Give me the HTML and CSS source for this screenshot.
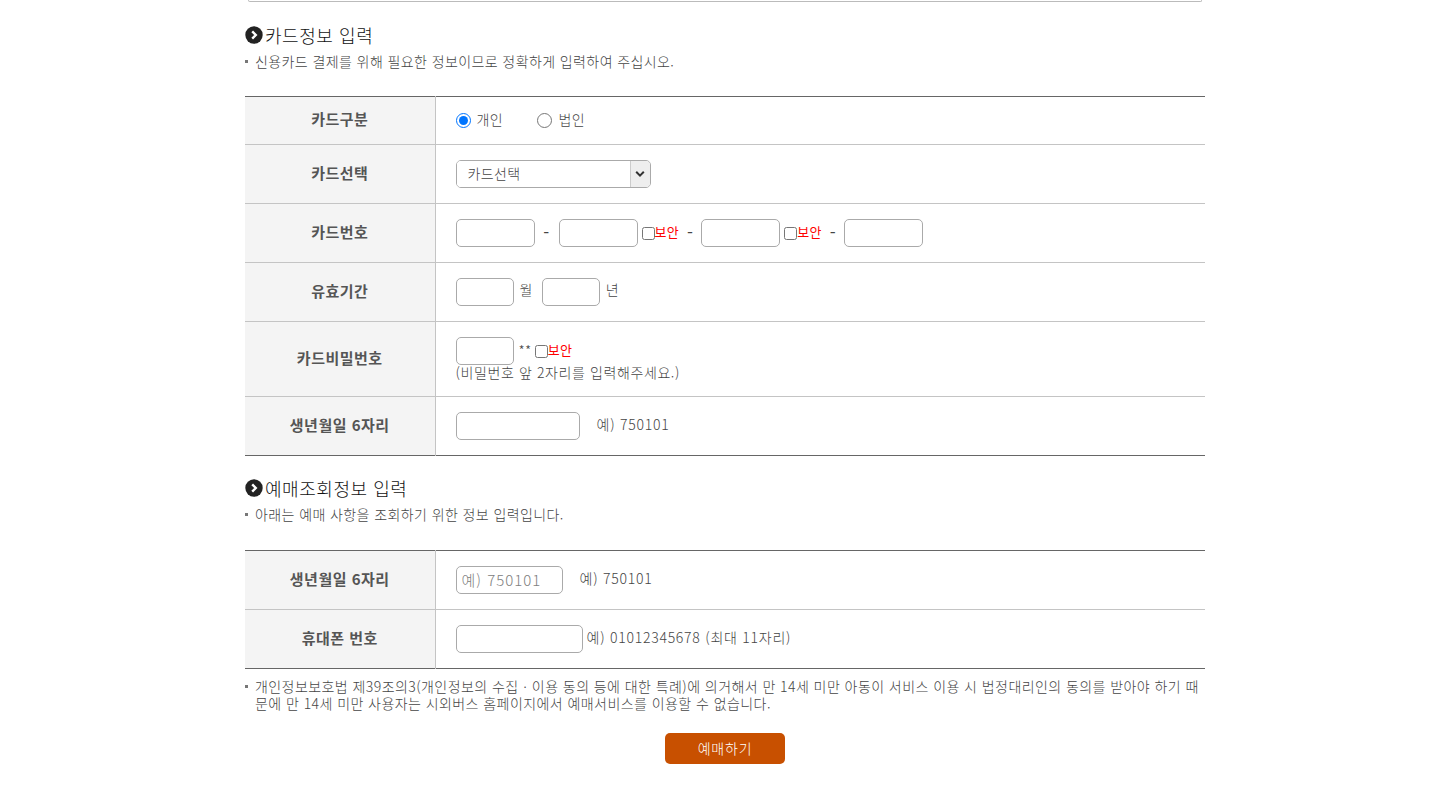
FILE: index.html
```html
<!DOCTYPE html>
<html lang="ko">
<head>
<meta charset="utf-8">
<title>카드정보 입력</title>
<link rel="stylesheet" href="styles.css">
</head>
<body>
<main class="wrap">
  <div class="top-box"></div>

  <h2 class="title"><svg class="title-icon" viewBox="0 0 18 18" width="18" height="18"><circle cx="9" cy="9" r="8.7" fill="#222"/><path d="M7.2 5.4 L10.8 9 L7.2 12.6" fill="none" stroke="#fff" stroke-width="2.4"/></svg>카드정보 입력</h2>
  <p class="bullet">신용카드 결제를 위해 필요한 정보이므로 정확하게 입력하여 주십시오.</p>

  <table class="form-table first">
    <tr class="r48">
      <th>카드구분</th>
      <td>
        <label class="radio"><input type="radio" name="kind" checked><span class="raised">개인</span></label>
        <label class="radio"><input type="radio" name="kind"><span class="raised">법인</span></label>
      </td>
    </tr>
    <tr class="r59">
      <th>카드선택</th>
      <td>
        <div class="select-wrap">
          <select class="select"><option>카드선택</option></select>
          <span class="select-arrow"><svg viewBox="0 0 10 8" width="10" height="8"><path d="M1.2 1.8 L5 5.6 L8.8 1.8" fill="none" stroke="#333" stroke-width="2"/></svg></span>
        </div>
      </td>
    </tr>
    <tr class="r59">
      <th>카드번호</th>
      <td>
        <div class="line">
          <input class="inp w79" type="text"><span class="dash">-</span>
          <input class="inp w79" type="text"><label class="secure"><input type="checkbox"><span class="raised-more">보안</span></label><span class="dash d2">-</span>
          <input class="inp w79" type="text"><label class="secure"><input type="checkbox"><span class="raised-more">보안</span></label><span class="dash d2">-</span>
          <input class="inp w79" type="text">
        </div>
      </td>
    </tr>
    <tr class="r59">
      <th>유효기간</th>
      <td>
        <div class="line">
          <input class="inp w58" type="text"><span class="unit">월</span>
          <input class="inp w58" type="text"><span class="unit">년</span>
        </div>
      </td>
    </tr>
    <tr class="r75">
      <th>카드비밀번호</th>
      <td>
        <div class="line">
          <input class="inp w58" type="text"><span class="stars">**</span><label class="secure"><input type="checkbox"><span class="raised-more">보안</span></label>
        </div>
        <div class="hint">(비밀번호 앞 2자리를 입력해주세요.)</div>
      </td>
    </tr>
    <tr class="r59">
      <th>생년월일 6자리</th>
      <td>
        <div class="line">
          <input class="inp w124" type="text"><span class="example e17">예) 750101</span>
        </div>
      </td>
    </tr>
  </table>

  <h2 class="title"><svg class="title-icon" viewBox="0 0 18 18" width="18" height="18"><circle cx="9" cy="9" r="8.7" fill="#222"/><path d="M7.2 5.4 L10.8 9 L7.2 12.6" fill="none" stroke="#fff" stroke-width="2.4"/></svg>예매조회정보 입력</h2>
  <p class="bullet">아래는 예매 사항을 조회하기 위한 정보 입력입니다.</p>

  <table class="form-table second">
    <tr class="r59">
      <th>생년월일 6자리</th>
      <td>
        <div class="line">
          <input class="inp w107" type="text" placeholder="예) 750101"><span class="example e17">예) 750101</span>
        </div>
      </td>
    </tr>
    <tr class="r59">
      <th>휴대폰 번호</th>
      <td>
        <div class="line">
          <input class="inp w127" type="text"><span class="example e4">예) 01012345678 (최대 11자리)</span>
        </div>
      </td>
    </tr>
  </table>

  <p class="bullet note">개인정보보호법 제39조의3(개인정보의 수집ㆍ이용 동의 등에 대한 특례)에 의거해서 만 14세 미만 아동이 서비스 이용 시 법정대리인의 동의를 받아야 하기 때문에 만 14세 미만 사용자는 시외버스 홈페이지에서 예매서비스를 이용할 수 없습니다.</p>

  <div class="actions"><button class="submit" type="button">예매하기</button></div>
</main>
</body>
</html>
```
FILE: styles.css
```css
* { box-sizing: border-box; }
html, body { margin: 0; padding: 0; background: #fff; }
body {
  font-family: "Noto Sans CJK KR", "Noto Sans", sans-serif;
  font-size: 14px;
  font-weight: 300;
  letter-spacing: 0.4px;
  color: #444;
}
.wrap { width: 960px; margin: 0 0 0 245px; padding-bottom: 21px; }
.top-box {
  height: 2px;
  margin: 0 3px;
  border: 1px solid #bbb;
  border-top: 0;
  border-radius: 0 0 5px 5px;
}
.title {
  display: flex;
  align-items: center;
  margin: 0;
  height: 26px;
  font-size: 18px;
  font-weight: 300;
  letter-spacing: 0.55px;
  color: #111;
}
.form-table + .title { margin-top: 19px; }
.top-box + .title { margin-top: 20px; }
.title-icon { margin-right: 2px; flex: none; }
.bullet {
  position: relative;
  margin: 5px 0 0;
  padding-left: 10px;
  line-height: 17px;
}
.bullet::before {
  content: "";
  position: absolute;
  left: 0;
  top: 7px;
  width: 3px;
  height: 3px;
  background: #777;
}
.form-table {
  width: 960px;
  margin-top: 26px;
  border-collapse: collapse;
  table-layout: fixed;
  border-top: 1px solid #666;
  border-bottom: 1px solid #666;
}
.form-table.second { margin-top: 27px; }
.form-table tr + tr { border-top: 1px solid #c4c4c4; }
.r48 { height: 48px; }
.r59 { height: 59px; }
.r75 { height: 75px; }
.form-table th {
  width: 190px;
  padding: 0 0 4px;
  background: #f4f4f4;
  border-right: 1px solid #c4c4c4;
  font-weight: 700;
  font-size: 15px;
  letter-spacing: 0.5px;
  color: #555;
  text-align: center;
}
.form-table td { padding: 0 0 0 20px; }
.line { display: flex; align-items: center; }
.raised { padding-bottom: 3px; }
.raised-more { padding-bottom: 4px; }
.radio { display: inline-flex; align-items: center; margin-right: 30px; }
.radio input { width: 15px; height: 15px; margin: 0 6px 0 0; }
.select-wrap {
  display: flex;
  width: 195px;
  height: 28px;
  border: 1px solid #aaa;
  border-radius: 5px;
  overflow: hidden;
}
.select {
  flex: 1;
  min-width: 0;
  appearance: none;
  border: 0;
  background: #fff;
  padding: 0 11px 2px;
  font: inherit;
  letter-spacing: 0.4px;
  color: #444;
  outline: 0;
}
.select-arrow {
  display: flex;
  align-items: center;
  justify-content: center;
  width: 20px;
  background: #eee;
  border-left: 1px solid #ccc;
}
.inp {
  height: 28px;
  margin: 0;
  padding: 0 5px;
  border: 1px solid #aaa;
  border-radius: 5px;
  background: #fff;
  font: inherit;
  color: #444;
  outline: 0;
}
.inp::placeholder { color: #808080; font-size: 15px; letter-spacing: 1px; }
.w58 { width: 58px; }
.w79 { width: 79px; }
.w107 { width: 107px; }
.w124 { width: 124px; }
.w127 { width: 127px; }
.dash { width: 24px; padding-bottom: 4px; font-size: 17px; font-weight: 400; text-align: center; }
.dash.d2 { width: 22px; }
.secure { display: inline-flex; align-items: center; color: #f00; font-size: 13px; font-weight: 400; margin-left: 4px; }
.secure input { width: 13px; height: 13px; margin: 0; }
.unit { margin: 0 9px 0 6px; padding-bottom: 7px; }
.stars { margin: 0 -1px 0 5px; padding-bottom: 3px; }
.hint { line-height: 15px; padding-bottom: 1px; letter-spacing: 0.6px; }
.example { padding-bottom: 4px; letter-spacing: 0.75px; }
.e17 { margin-left: 17px; }
.e4 { margin-left: 4px; }
.note { margin-top: 9px; letter-spacing: 0.43px; }
.actions { display: flex; justify-content: center; margin-top: 21px; }
.submit {
  width: 120px;
  height: 31px;
  padding: 0 0 2px;
  border: 0;
  border-radius: 5px;
  background: #c85000;
  color: #fff;
  font: inherit;
  letter-spacing: 0.8px;
}
```
